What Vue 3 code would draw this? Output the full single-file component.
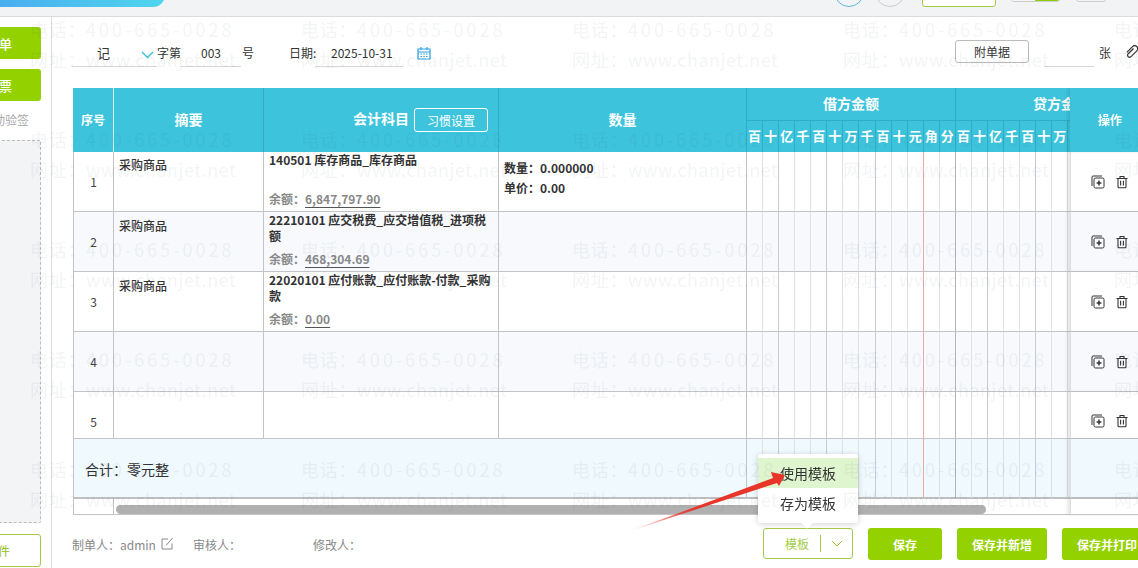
<script setup>
const digits = ['百','十','亿','千','百','十','万','千','百','十','元','角','分']
const amountCols = [...digits.map((d, i) => ({ d, i, side: 'd' })), ...digits.map((d, i) => ({ d, i, side: 'c' }))]
const rows = [
  { no: 1, summary: '采购商品', subject: '140501 库存商品_库存商品', balance: '6,847,797.90', qty: true },
  { no: 2, summary: '采购商品', subject: '22210101 应交税费_应交增值税_进项税额', balance: '468,304.69' },
  { no: 3, summary: '采购商品', subject: '22020101 应付账款_应付账款-付款_采购款', balance: '0.00' },
  { no: 4, summary: '', subject: '' },
  { no: 5, summary: '', subject: '', short: true }
]
const marks = Array.from({ length: 25 }, (_, i) => i)
function lineClass(c) {
  return {
    yuan: c.i === 10,
    third: c.i % 3 === 1 && c.i !== 10,
    group: c.i === 12
  }
}
</script>

<template>
  <div class="page">
    <header class="topbar">
      <div class="banner"></div>
      <div class="circle blue"></div>
      <div class="circle"></div>
      <div class="outline-top"></div>
      <div class="toggle"><i></i><b></b></div>
      <div class="grey-box"></div>
    </header>

    <div class="body">
      <aside class="side">
        <div class="side-btn">单</div>
        <div class="side-btn">票</div>
        <div class="side-label">动验签</div>
        <div class="dash"></div>
        <div class="side-outline">件</div>
      </aside>

      <main class="main">
        <div class="vhead">
          <span class="under word">
            <span class="ji">记</span>
            <svg class="chev" width="13" height="8" viewBox="0 0 13 8"><path d="M1 1l5.5 5.5L12 1" fill="none" stroke="#3fc4dc" stroke-width="1.5"/></svg>
          </span>
          <span class="zi">字第</span>
          <span class="under num">003</span>
          <span class="hao">号</span>
          <span class="date-label">日期:</span>
          <span class="under date">2025-10-31</span>
          <svg class="cal" width="14" height="14" viewBox="0 0 14 14"><path d="M1 3h12v10H1zM1 6h12M4 1v3M10 1v3" fill="none" stroke="#2f9fe0" stroke-width="1.2"/><path d="M3.5 8h1.5M6.3 8h1.5M9 8h1.5M3.5 10.5h1.5M6.3 10.5h1.5M9 10.5h1.5" stroke="#2f9fe0" stroke-width="1.2"/></svg>
          <span class="attach">附单据</span>
          <span class="under pages"></span>
          <span class="zhang">张</span>
          <svg class="clip" width="14" height="14" viewBox="0 0 14 14"><path d="M8.5 3.5L3 9a2 2 0 0 0 2.8 2.8l6-6a3 3 0 0 0-4.3-4.2L1.8 7.4" fill="none" stroke="#333" stroke-width="1.2"/></svg>
        </div>

        <div class="table-wrap">
          <table class="voucher">
            <colgroup>
              <col class="c-no"><col class="c-sum"><col class="c-sub"><col class="c-qty">
              <col v-for="c in amountCols" :key="c.side + c.i" class="c-amt">
              <col class="c-op">
            </colgroup>
            <thead>
              <tr class="h1">
                <th rowspan="2" class="no-h">序号</th>
                <th rowspan="2">摘要</th>
                <th rowspan="2" class="subject-h"><span>会计科目</span><button class="habit">习惯设置</button></th>
                <th rowspan="2">数量</th>
                <th colspan="13">借方金额</th>
                <th colspan="13" class="credit-h">贷方金额</th>
                <th rowspan="2" class="op op-h">操作</th>
              </tr>
              <tr class="h2">
                <th v-for="c in amountCols" :key="c.side + c.i">{{ c.d }}</th>
              </tr>
            </thead>
            <tbody>
              <tr v-for="r in rows" :key="r.no" :class="{ even: r.no % 2 === 0, short: r.short }">
                <td class="no"><span>{{ r.no }}</span></td>
                <td class="sum">{{ r.summary }}</td>
                <td class="sub">
                  <div v-if="r.subject" class="sub-inner">
                    <div class="sub-name">{{ r.subject }}</div>
                    <div class="bal">余额：<u>{{ r.balance }}</u></div>
                  </div>
                </td>
                <td class="qty">
                  <template v-if="r.qty">
                    <div>数量：0.000000</div>
                    <div>单价：0.00</div>
                  </template>
                </td>
                <td v-for="c in amountCols" :key="c.side + c.i" class="amt" :class="lineClass(c)"></td>
                <td class="op">
                  <div class="ops">
                    <svg width="14" height="14" viewBox="0 0 14 14"><path d="M1 11V2a1 1 0 0 1 1-1h9" fill="none" stroke="#333"/><rect x="3" y="3" width="10" height="10" rx="1.5" fill="none" stroke="#333"/><path d="M5.6 8h4.8M8 5.6v4.8" stroke="#333" stroke-width="1.5"/></svg>
                    <svg width="14" height="14" viewBox="0 0 14 14"><path d="M1.5 3.5h11M5 3.5V1.5h4v2M3 3.5v8.2a1 1 0 0 0 1 1h6a1 1 0 0 0 1-1V3.5M5.6 5.8v4.6M8.4 5.8v4.6" fill="none" stroke="#333" stroke-width="1.1"/></svg>
                  </div>
                </td>
              </tr>
              <tr class="total">
                <td colspan="4" class="total-text">合计：零元整</td>
                <td v-for="c in amountCols" :key="c.side + c.i" class="amt" :class="lineClass(c)"></td>
                <td class="op"></td>
              </tr>
              <tr class="bar-row">
                <td></td>
                <td colspan="29"></td>
                <td class="op"></td>
              </tr>
            </tbody>
          </table>
          <div class="thumb"></div>
        </div>

        <footer class="foot">
          <span class="who first">制单人：admin</span>
          <svg class="edit" width="13" height="13" viewBox="0 0 13 13"><path d="M11 6.5V12H1V2h6M5 8.5L11.5 1" fill="none" stroke="#888"/></svg>
          <span class="who audit">审核人：</span>
          <span class="who modify">修改人：</span>
          <div class="tpl-wrap">
            <div class="menu">
              <div class="menu-item active">使用模板</div>
              <div class="menu-item">存为模板</div>
              <i class="menu-tip"></i>
            </div>
            <div class="tpl-btn"><span class="tpl-t">模板</span><i class="sep"></i>
              <svg width="12" height="7" viewBox="0 0 12 7"><path d="M1 1l5 5 5-5" fill="none" stroke="#9ac83a"/></svg>
            </div>
          </div>
          <button class="save s1">保存</button>
          <button class="save s2">保存并新增</button>
          <button class="save s3">保存并打印</button>
        </footer>
      </main>
    </div>

    <div class="watermark">
      <div v-for="m in marks" :key="m" class="mark">
        <div class="tel"><span class="cn">电话：</span>400-665-0028</div>
        <div class="web"><span class="cn">网址：</span>www.chanjet.net</div>
      </div>
    </div>

    <svg class="red-arrow" width="160" height="80" viewBox="0 0 160 80">
      <defs>
        <linearGradient id="arrowFade" x1="0" y1="1" x2="1" y2="0">
          <stop offset="0" stop-color="#e8352a" stop-opacity=".2"/>
          <stop offset=".4" stop-color="#e8352a"/>
        </linearGradient>
      </defs>
      <path d="M3 70L143 18 141 12 155 15 149 26 147 23Z" fill="url(#arrowFade)"/>
    </svg>
  </div>
</template>

<style>
html, body { margin: 0; background: #fff; }
</style>

<style scoped>
.page {
  position: relative;
  width: 1138px;
  height: 568px;
  overflow: hidden;
  background: #fff;
  color: #333;
  font-family: "Noto Sans CJK SC", "Open Sans", sans-serif;
  font-size: 12px;
}
.topbar {
  height: 16px;
  background: #f2f3f5;
  border-bottom: 1px solid #dcdcdc;
  display: flex;
  align-items: flex-end;
  overflow: hidden;
}
.banner {
  width: 165px;
  height: 30px;
  margin-bottom: 9px;
  border-radius: 0 0 12px 0;
  background: linear-gradient(90deg, #49aeef, #4fd6ee);
  flex: none;
}
.circle {
  width: 28px;
  height: 28px;
  border-radius: 50%;
  border: 1px solid #ccc;
  margin-left: 11px;
  margin-bottom: 9px;
  flex: none;
}
.circle.blue { border-color: #5cb7e0; margin-left: 669px; }
.outline-top {
  width: 72px;
  height: 30px;
  margin: 0 0 9px 17px;
  background: #fff;
  border: 1px solid #a5cc47;
  border-radius: 3px;
  flex: none;
}
.toggle {
  width: 49px;
  height: 20px;
  margin: 0 0 14px 15px;
  display: flex;
  border-radius: 3px;
  overflow: hidden;
  border: 1px solid #ccc;
  box-sizing: border-box;
  flex: none;
}
.toggle i { flex: 1; background: #f5f5f5; }
.toggle b { width: 24px; background: #8fcc0c; }
.grey-box {
  width: 30px;
  height: 20px;
  margin: 0 0 14px 16px;
  border: 1px solid #ccc;
  border-radius: 3px;
  box-sizing: border-box;
  flex: none;
}
.body { display: flex; height: 551px; }
.side {
  width: 51px;
  flex: none;
  border-right: 1px solid #dedede;
  display: flex;
  flex-direction: column;
  align-items: flex-end;
  padding-right: 10px;
  margin-left: -10px;
}
.side-btn {
  width: 52px;
  height: 32px;
  margin-top: 10px;
  background: #94d100;
  color: #fff;
  border-radius: 3px;
  display: flex;
  align-items: center;
  justify-content: flex-end;
  padding-right: 29px;
  box-sizing: border-box;
  font-weight: 500;
  font-size: 13px;
  flex: none;
}
.side-label {
  width: 51px;
  margin-top: 10px;
  height: 20px;
  line-height: 18px;
  color: #aaa;
  white-space: nowrap;
  direction: rtl;
  padding-right: 12px;
  box-sizing: border-box;
  flex: none;
}
.dash {
  width: 51px;
  height: 383px;
  margin-top: 9px;
  background: #f3f4f6;
  border: 1px dashed #bbb;
  box-sizing: border-box;
  border-radius: 2px;
  flex: none;
}
.side-outline {
  width: 51px;
  height: 33px;
  margin-top: 11px;
  border: 1px solid #a5cc47;
  color: #94c11f;
  border-radius: 3px;
  box-sizing: border-box;
  display: flex;
  align-items: center;
  justify-content: flex-end;
  padding-right: 30px;
  flex: none;
}
.main { flex: 1; min-width: 0; display: flex; flex-direction: column; }
.vhead {
  height: 71px;
  flex: none;
  padding-left: 20px;
  display: flex;
  align-items: flex-start;
  color: #333;
  line-height: 18px;
  white-space: nowrap;
}
.vhead > * { margin-top: 27px; flex: none; }
.under { border-bottom: 1px solid #d8d8d8; height: 23px; box-sizing: border-box; }
.word {
  width: 85px;
  display: flex;
  justify-content: space-between;
  padding: 0 3px 0 25px;
  box-sizing: border-box;
}
.ji { font-size: 13px; }
.chev { margin-top: 7px; }
.zi { width: 24px; }
.num { width: 60px; text-align: center; }
.hao { width: 48px; padding-left: 1px; box-sizing: border-box; }
.date-label { width: 26px; }
.date { width: 88px; padding-left: 16px; }
.vhead .cal { margin: 29px 0 0 14px; }
.vhead .attach {
  width: 74px;
  height: 23px;
  line-height: 21px;
  box-sizing: border-box;
  border: 1px solid #bbb;
  border-radius: 3px;
  text-align: center;
  margin: 23px 0 0 524px;
}
.pages { width: 50px; margin-left: 15px; }
.zhang { margin-left: 5px; width: 26px; }
.vhead .clip { margin-top: 28px; }
.table-wrap {
  position: relative;
  margin-left: 21px;
  width: 1077px;
  height: 428px;
  overflow: hidden;
  flex: none;
}
.voucher {
  table-layout: fixed;
  width: 1172px;
  border-collapse: separate;
  border-spacing: 0;
  font-size: 12px;
}
.c-no { width: 41px; }
.c-sum { width: 150px; }
.c-sub { width: 235px; }
.c-qty { width: 248px; }
.c-amt { width: 16.077px; }
.c-op { width: 80px; }
thead th {
  background: #3dc4dc;
  color: #fff;
  font-weight: 700;
  padding: 0 0 2px;
  border-right: 1px solid #2fadc4;
  font-size: 14px;
}
.h1 th { height: 32px; box-sizing: border-box; }
.h2 th { height: 32px; border-top: 1px solid #2fadc4; box-sizing: border-box; font-size: 13px; overflow: hidden; }
.h1 .no-h { font-size: 12px; border-right-color: #d6f0f5; }
.h1 .subject-h { text-align: right; padding: 0 10px 0 0; }
.subject-h span { margin-right: 5px; }
.habit {
  width: 74px;
  height: 24px;
  border: 1px solid #fff;
  background: transparent;
  color: #fff;
  border-radius: 3px;
  font: inherit;
  font-weight: 400;
  font-size: 12px;
  padding: 0;
  vertical-align: middle;
}
.h1 .credit-h { text-align: left; padding-left: 77px; }
.op {
  position: sticky;
  right: 0;
  box-shadow: -3px 0 3px rgba(0, 0, 0, .09);
  border-left: 1px solid #ddd;
}
.h1 .op-h { font-size: 12px; border-left: none; border-right: none; z-index: 1; }
tbody td {
  padding: 0;
  height: 60px;
  box-sizing: border-box;
  border-right: 1px solid #c4c4c8;
  border-bottom: 1px solid #c4c4c8;
  background: #fff;
  vertical-align: top;
}
tr.even td { background: #f7f9fc; }
tr.short td { height: 47px; }
td.no { border-left: 1px solid #c4c4c8; text-align: center; color: #444; }
td.no span { display: block; padding-top: 21px; }
td.sum { padding: 4px 5px; font-weight: 500; color: #333; line-height: 20px; }
tr:first-child td.sum { padding-top: 3px; }
td.sub { padding: 0 5px; }
.sub-inner { height: 58px; display: flex; flex-direction: column; justify-content: space-between; box-sizing: border-box; }
.sub-name { font-weight: 700; color: #333; line-height: 16px; word-break: break-all; }
.bal { font-weight: 700; color: #888; line-height: 18px; padding-bottom: 2px; }
.bal u { text-decoration-color: #555; text-underline-offset: 3px; }
td.qty { padding: 6px 5px; font-weight: 700; line-height: 20px; color: #333; }
tbody td.amt { border-right-color: #e0e0e2; }
tbody td.amt.third { border-right-color: #c9c9dc; }
tbody td.amt.yuan { border-right-color: #eba9a9; }
tbody td.amt.group { border-right-color: #b4b4ba; }
.ops { display: flex; gap: 10px; justify-content: center; padding-top: 23px; }
tr.short .ops { padding-top: 22px; }
tr.total td { background: #eff9fe; height: 60px; border-bottom: 2px solid #c0c0c0; }
tr.total .total-text { padding: 20px 0 0 11px; border-left: 1px solid #c4c4c8; font-size: 14px; color: #333; }
tr.bar-row td { background: #fff; height: 16px; border-bottom: 1px solid #c4c4c8; }
tr.bar-row td:first-child { border-left: 1px solid #c4c4c8; }
.thumb {
  position: absolute;
  left: 43px;
  top: 417px;
  width: 870px;
  height: 9px;
  border-radius: 5px;
  background: #b0b0b0;
}
.foot {
  flex: 1;
  display: flex;
  align-items: flex-start;
  padding-left: 20px;
  white-space: nowrap;
}
.foot > * { flex: none; }
.who { color: #888; margin-top: 20px; line-height: 18px; }
.first { width: 84px; }
.edit { margin: 21px 0 0 5px; }
.audit { margin-left: 19px; width: 120px; }
.modify { width: 60px; }
.tpl-wrap { position: relative; margin: 12px 0 0 390px; }
.tpl-btn {
  width: 90px;
  height: 31px;
  box-sizing: border-box;
  border: 1px solid #a5cc47;
  border-radius: 3px;
  display: flex;
  align-items: center;
  padding-left: 21px;
  color: #a5cc47;
}
.tpl-t { width: 35px; }
.sep { width: 1px; height: 17px; background: #a5cc47; margin-right: 10px; }
.menu {
  position: absolute;
  left: -5px;
  bottom: 36px;
  width: 100px;
  height: 69px;
  padding-top: 4px;
  box-sizing: border-box;
  background: #fff;
  border-radius: 3px;
  box-shadow: 0 1px 6px rgba(0, 0, 0, .18);
  z-index: 3;
  font-size: 14px;
  color: #333;
}
.menu-item { height: 30px; line-height: 30px; padding-left: 22px; }
.menu-item.active { background: #dff5cf; }
.menu-tip {
  position: absolute;
  left: 45px;
  bottom: -4px;
  width: 8px;
  height: 8px;
  background: #fff;
  transform: rotate(45deg);
}
.save {
  height: 32px;
  margin: 12px 0 0 15px;
  border: none;
  border-radius: 3px;
  background: #94d100;
  color: #fff;
  font: inherit;
  font-weight: 700;
  padding: 0;
}
.s1 { width: 74px; }
.s2 { width: 90px; }
.s3 { width: 90px; }
.watermark {
  position: absolute;
  left: 30px;
  top: 14px;
  width: 1355px;
  display: grid;
  grid-template-columns: repeat(5, 271px);
  grid-auto-rows: 110px;
  pointer-events: none;
  z-index: 5;
  color: rgba(40, 60, 80, .055);
  font-size: 18px;
}
.mark { line-height: 30px; white-space: nowrap; }
.cn { letter-spacing: .7px; }
.tel { letter-spacing: 3px; }
.web { letter-spacing: .5px; }
.red-arrow {
  position: absolute;
  left: 630px;
  top: 460px;
  z-index: 6;
  pointer-events: none;
}
</style>
